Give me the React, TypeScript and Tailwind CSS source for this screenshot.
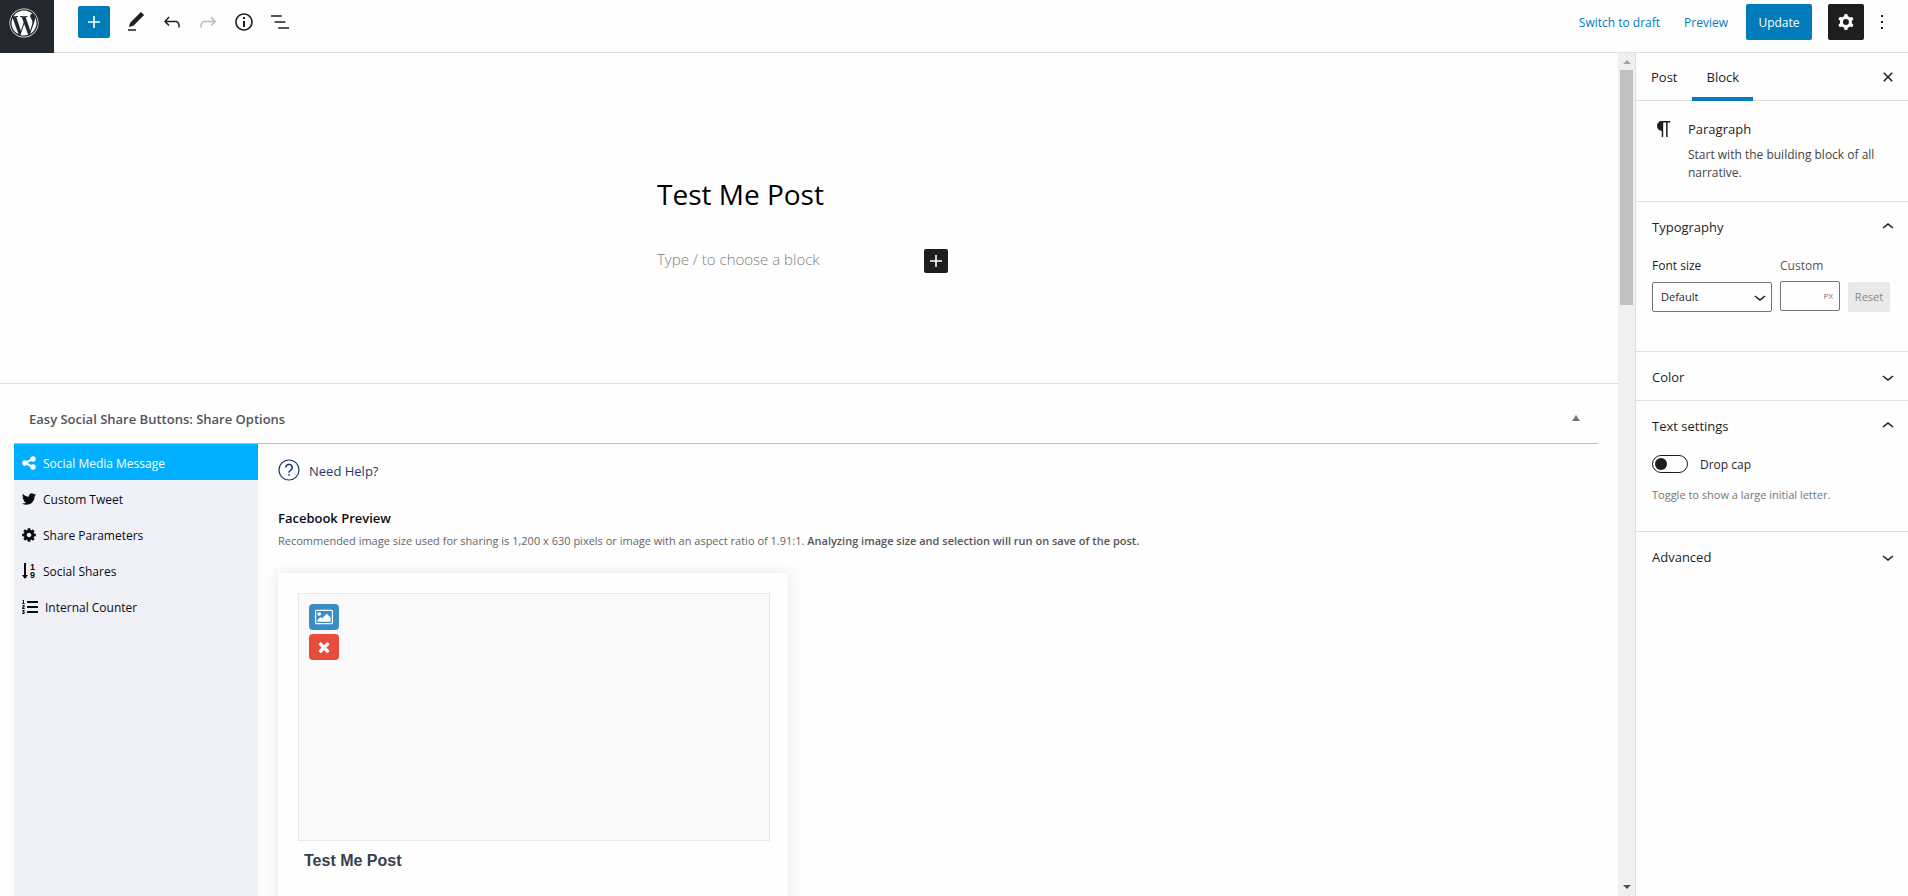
import { useState } from 'react';
import type { ReactNode } from 'react';
import clsx from 'clsx';
import { FaListOl, FaWordpress } from 'react-icons/fa';

const icons = {
    plus: 'M18 11.2h-5.2V6h-1.6v5.2H6v1.6h5.2V18h1.6v-5.2H18z',
    pencil: 'M20.1 5.1L16.9 2 6.2 12.7l-1.3 4.4 4.5-1.3L20.1 5.1zM4 20.8h8v-1.5H4v1.5z',
    undo: 'M18.3 11.7c-.6-.6-1.4-.9-2.3-.9H6.7l2.9-3.3-1.1-1-4.5 5L8.5 16l1-1-2.7-2.7H16c.5 0 .9.2 1.3.5 1 1 1 3.4 1 4.5v.3h1.5v-.2c0-1.5 0-4.3-1.5-5.7z',
    redo: 'M15.6 6.5l-1.1 1 2.9 3.3H8c-.9 0-1.7.3-2.3.9-1.4 1.5-1.4 4.2-1.4 5.6v.2h1.5v-.3c0-1.1 0-3.5 1-4.5.3-.3.7-.5 1.3-.5h9.2L14.5 15l1.1 1.1 4.6-4.6-4.6-5z',
    info: 'M12 3.2c-4.8 0-8.8 3.9-8.8 8.8 0 4.8 3.9 8.8 8.8 8.8 4.8 0 8.8-3.9 8.8-8.8 0-4.8-4-8.8-8.8-8.8zm0 16c-4 0-7.2-3.3-7.2-7.2C4.8 8 8 4.8 12 4.8s7.2 3.3 7.2 7.2c0 4-3.2 7.2-7.2 7.2zM11 17h2v-6h-2v6zm0-8h2V7h-2v2z',
    outline: 'M13.8 5.2H3v1.5h10.8V5.2zm-3.6 12v1.5H21v-1.5H10.2zm7.2-6H6.6v1.5h10.8v-1.5z',
    cog: 'M10.289 4.836A1 1 0 0111.275 4h1.306a1 1 0 01.987.836l.244 1.466c.787.26 1.503.679 2.108 1.218l1.393-.522a1 1 0 011.216.437l.653 1.13a1 1 0 01-.23 1.273l-1.148.944a6.025 6.025 0 010 2.435l1.149.946a1 1 0 01.23 1.272l-.653 1.13a1 1 0 01-1.216.437l-1.394-.522c-.605.54-1.32.958-2.108 1.218l-.244 1.466a1 1 0 01-.987.836h-1.306a1 1 0 01-.986-.836l-.244-1.466a5.995 5.995 0 01-2.108-1.218l-1.394.522a1 1 0 01-1.217-.436l-.653-1.131a1 1 0 01.23-1.272l1.149-.946a6.026 6.026 0 010-2.435l-1.148-.944a1 1 0 01-.23-1.272l.653-1.131a1 1 0 011.217-.437l1.393.522a5.994 5.994 0 012.108-1.218l.244-1.466zM14.929 12a3 3 0 11-6 0 3 3 0 016 0z',
    more: 'M13 19h-2v-2h2v2zm0-6h-2v-2h2v2zm0-6h-2V5h2v2z',
    close: 'M12 13.06l3.712 3.713 1.061-1.06L13.061 12l3.712-3.712-1.06-1.06L12 10.938 8.288 7.227l-1.061 1.06L10.939 12l-3.712 3.712 1.06 1.061L12 13.061z',
    down: 'M17.5 11.6L12 16l-5.5-4.4.9-1.2L12 14l4.5-3.6 1 1.2z',
    up: 'M6.5 12.4L12 8l5.5 4.4-.9 1.2L12 10l-4.5 3.6-1-1.2z',
    paragraph: 'M18.3 4H9.9v-.1l-.9.2c-2.3.4-4 2.4-4 4.8s1.7 4.4 4 4.8l.7.1V20h1.5V5.5h2.9V20h1.5V5.5h2.7V4z',
};

const glyphs = {
    share: 'M1344 1024q133 0 226.5 93.5t93.5 226.5-93.5 226.5-226.5 93.5-226.5-93.5-93.5-226.5q0-12 2-34l-360-180q-92 86-218 86-133 0-226.5-93.5t-93.5-226.5 93.5-226.5 226.5-93.5q126 0 218 86l360-180q-2-22-2-34 0-133 93.5-226.5t226.5-93.5 226.5 93.5 93.5 226.5-93.5 226.5-226.5 93.5q-126 0-218-86l-360 180q2 22 2 34t-2 34l360 180q92-86 218-86z',
    twitter: 'M1684 408q-67 98-162 167 1 14 1 42 0 130-38 259.5t-115.5 248.5-184.5 210.5-258 146-323 54.5q-271 0-496-145 35 4 78 4 225 0 401-138-105-2-188-64.5t-114-159.5q33 5 61 5 43 0 85-11-112-23-185.5-111.5t-73.5-205.5v-4q68 38 146 41-66-44-105-115t-39-154q0-88 44-163 121 149 294.5 238.5t371.5 99.5q-8-38-8-74 0-134 94.5-228.5t228.5-94.5q140 0 236 102 109-21 205-78-37 115-142 178 93-10 186-50z',
    gear: 'M1152 896q0-106-75-181t-181-75-181 75-75 181 75 181 181 75 181-75 75-181zm512-109v222q0 12-8 23t-20 13l-185 28q-19 54-39 91 35 50 107 138 10 12 10 25t-9 23q-27 37-99 108t-94 71q-12 0-26-9l-138-108q-44 23-91 38-16 136-29 186-7 28-36 28h-222q-14 0-24.5-8.5t-11.5-21.5l-28-184q-49-16-90-37l-141 107q-10 9-25 9-14 0-25-11-126-114-165-168-7-10-7-23 0-12 8-23 15-21 51-66.5t54-70.5q-27-50-41-99l-183-27q-13-2-21-12.5t-8-23.5v-222q0-12 8-23t19-13l186-28q14-46 39-92-40-57-107-138-10-12-10-24 0-10 9-23 26-36 98.5-107.5t94.5-71.5q13 0 26 10l138 107q44-23 91-38 16-136 29-186 7-28 36-28h222q14 0 24.5 8.5t11.5 21.5l28 184q49 16 90 37l142-107q9-9 24-9 13 0 25 10 129 119 165 170 7 8 7 22 0 12-8 23-15 21-51 66.5t-54 70.5q26 50 41 98l183 28q13 2 21 12.5t8 23.5z',
    times: 'M1490 1322q0 40-28 68l-136 136q-28 28-68 28t-68-28l-294-294-294 294q-28 28-68 28t-68-28l-136-136q-28-28-28-68t28-68l294-294-294-294q-28-28-28-68t28-68l136-136q28-28 68-28t68 28l294 294 294-294q28-28 68-28t68 28l136 136q28 28 28 68t-28 68l-294 294 294 294q28 28 28 68z',
    picture: 'M576 576q0 80-56 136t-136 56-136-56-56-136 56-136 136-56 136 56 56 136zm1024 384v448h-1408v-192l320-320 160 160 512-512zm96-704h-1600q-13 0-22.5 9.5t-9.5 22.5v1216q0 13 9.5 22.5t22.5 9.5h1600q13 0 22.5-9.5t9.5-22.5v-1216q0-13-9.5-22.5t-22.5-9.5zm160 32v1216q0 66-47 113t-113 47h-1600q-66 0-113-47t-47-113v-1216q0-66 47-113t113-47h1600q66 0 113 47t47 113z',
};

const Icon = ({ name, className = 'size-6' }: { name: keyof typeof icons; className?: string }) => (
    <svg viewBox="0 0 24 24" fill="currentColor" fillRule="evenodd" aria-hidden="true" className={`shrink-0 ${className}`}>
        <path d={icons[name]} />
    </svg>
);

const Glyph = ({ name, className = 'size-4' }: { name: keyof typeof glyphs; className?: string }) => (
    <svg viewBox={name === 'picture' ? '-64 0 1920 1792' : '0 0 1792 1792'} fill="currentColor" aria-hidden="true" className={`shrink-0 ${className}`}>
        <path d={glyphs[name]} />
    </svg>
);

const SortIcon = () => (
    <svg
        viewBox="0 0 16 16"
        fill="currentColor"
        aria-hidden="true"
        className="size-4 shrink-0 overflow-visible font-['Liberation_Sans',Arial,sans-serif] text-[9px] font-bold"
    >
        <path d="M3 0h2v12h2l-3 4-3-4h2z" />
        <text x="9" y="7">1</text>
        <text x="9" y="15">9</text>
    </svg>
);

const tools: Array<{ icon: keyof typeof icons; label: string; disabled?: boolean }> = [
    { icon: 'pencil', label: 'Tools' },
    { icon: 'undo', label: 'Undo' },
    { icon: 'redo', label: 'Redo', disabled: true },
    { icon: 'info', label: 'Details' },
    { icon: 'outline', label: 'Outline' },
];

function Header() {
    return (
        <header className="flex h-[53px] shrink-0 border-b border-[#e0e0e0]">
            <a href="#" aria-label="View Posts" className="-mb-px w-[54px] bg-[#23282e] pl-[9px] pt-2 text-white">
                <FaWordpress className="size-[30px]" />
            </a>
            <div className="flex h-11 flex-1 items-center justify-between pl-6 pr-2">
                <div className="flex items-center">
                    <button aria-label="Add block" className="mr-2 flex size-8 items-center justify-center rounded-xs bg-[#007cba] text-white">
                        <Icon name="plus" />
                    </button>
                    {tools.map(({ icon, label, disabled }) => (
                        <button
                            key={label}
                            aria-label={label}
                            disabled={disabled}
                            className="flex size-9 items-center justify-center disabled:text-[#bbb]"
                        >
                            <Icon name={icon} />
                        </button>
                    ))}
                </div>
                <div className="flex items-center text-xs">
                    <button className="mr-6 pt-0.5 text-[#007cba]">Switch to draft</button>
                    <button className="mr-[18px] pt-0.5 text-[#007cba]">Preview</button>
                    <button className="mr-4 h-9 w-[66px] rounded-xs bg-[#007cba] pt-0.5 font-medium text-white">Update</button>
                    <button aria-label="Settings" className="flex size-9 items-center justify-center rounded-xs bg-[#1e1e1e] text-white">
                        <Icon name="cog" />
                    </button>
                    <button aria-label="Options" className="flex size-9 items-center justify-center">
                        <Icon name="more" />
                    </button>
                </div>
            </div>
        </header>
    );
}

const boxTabs: Array<{ label: string; icon: ReactNode }> = [
    { label: 'Social Media Message', icon: <Glyph name="share" /> },
    { label: 'Custom Tweet', icon: <Glyph name="twitter" /> },
    { label: 'Share Parameters', icon: <Glyph name="gear" /> },
    { label: 'Social Shares', icon: <SortIcon /> },
    { label: 'Internal Counter', icon: <FaListOl className="mx-px size-4" /> },
];

function ShareOptions() {
    const [tabIndex, setTabIndex] = useState(0);
    return (
        <section className="flex min-h-0 flex-1 flex-col border-t border-[#dcdcdc] pl-[14px] pr-5">
            <div className="flex h-[60px] shrink-0 items-center justify-between border-b border-[#bfbfbf] pl-[15px] pr-[18px] pt-3">
                <h2 className="text-[13px] font-semibold text-[#50555b]">Easy Social Share Buttons: Share Options</h2>
                <button aria-label="Toggle panel">
                    <svg viewBox="0 0 8 6" fill="#72777c" className="mb-1 h-[6px] w-2">
                        <path d="M4 0l4 6H0z" />
                    </svg>
                </button>
            </div>
            <div className="flex min-h-0 flex-1">
                <nav className="w-[244px] shrink-0 bg-[#eff1f6]">
                    {boxTabs.map(({ label, icon }, index) => (
                        <button
                            key={label}
                            onClick={() => setTabIndex(index)}
                            className={clsx(
                                'flex h-9 w-full items-center gap-1.5 pl-[7px] pt-px text-xs',
                                tabIndex === index ? 'bg-[#00b0ff] font-medium text-white' : 'text-[#0b0b18]',
                            )}
                        >
                            {icon}
                            <span className="pt-0.5">{label}</span>
                        </button>
                    ))}
                </nav>
                <div className="min-w-0 flex-1 pl-5 pt-[15px]">
                    <a href="#" className="flex h-[22px] items-center gap-[9px] text-[13px] text-[#1e3a6e]">
                        <svg viewBox="0 0 22 22" fill="none" stroke="currentColor" strokeWidth="1.2" className="size-[22px]">
                            <circle cx="11" cy="11" r="10" />
                            <path d="M7.8 8.6a3.2 3.2 0 1 1 4.7 2.8c-1 .6-1.5 1-1.5 2.3" strokeWidth="1.5" />
                            <path d="M11 15.2v1.6" strokeWidth="1.6" />
                        </svg>
                        <span className="pt-1">Need Help?</span>
                    </a>
                    <h3 className="mt-[27px] text-[13px] font-semibold leading-5 text-[#0b0b18]">Facebook Preview</h3>
                    <p className="mt-[5px] text-[11px] leading-4 text-[#666]">
                        Recommended image size used for sharing is 1,200 x 630 pixels or image with an aspect ratio of 1.91:1.{' '}
                        <strong className="font-semibold text-[#555]">Analyzing image size and selection will run on save of the post.</strong>
                    </p>
                    <div className="mt-6 h-[480px] w-[510px] max-w-full bg-[#fefefe] pl-5 pr-[18px] pt-5 shadow-[0_0_14px_rgba(0,0,0,0.1)]">
                        <div className="flex h-[248px] flex-col gap-1 border border-[#e9e9e9] bg-[#fafafa] p-2.5">
                            <button aria-label="Select image" className="flex h-[26px] w-[30px] items-center justify-center rounded bg-[#3b8dc8] text-white">
                                <Glyph name="picture" className="size-[18px]" />
                            </button>
                            <button aria-label="Remove image" className="flex h-[26px] w-[30px] items-center justify-center rounded bg-[#e74c3c] text-white">
                                <Glyph name="times" />
                            </button>
                        </div>
                        <div className="px-1.5 pt-2 font-['Liberation_Sans',Arial,sans-serif] text-base font-bold text-[#373e4d]">Test Me Post</div>
                    </div>
                </div>
            </div>
        </section>
    );
}

function Panel({ title, children }: { title: string; children?: ReactNode }) {
    const [open, setOpen] = useState(!!children);
    return (
        <section className="border-b border-[#e0e0e0] last:border-none">
            <button onClick={() => setOpen(!open)} className="flex h-12 w-full items-center justify-between pl-4 pr-2 pt-0.5 text-[13px] font-medium">
                <span className="pt-0.5">{title}</span>
                <Icon name={open ? 'up' : 'down'} />
            </button>
            {open && children}
        </section>
    );
}

function Sidebar() {
    return (
        <aside className="w-[273px] shrink-0 border-l border-[#e0e0e0] text-xs">
            <div className="flex h-12 items-stretch border-b border-[#e0e0e0] text-[13px]">
                <button className="px-[15px] pt-0.5 font-medium">Post</button>
                <button className="-mb-px border-b-4 border-[#007cba] px-[14px] pt-1.5 font-medium">Block</button>
                <button aria-label="Close settings" className="ml-auto mr-2">
                    <Icon name="close" />
                </button>
            </div>
            <div className="flex h-[101px] gap-3 border-b border-[#e0e0e0] pl-4 pr-4 pt-4">
                <Icon name="paragraph" />
                <div>
                    <h2 className="text-[13px] font-medium leading-6">Paragraph</h2>
                    <p className="mt-[5px] leading-[18px] text-[#444]">Start with the building block of all narrative.</p>
                </div>
            </div>
            <Panel title="Typography">
                <div className="flex h-[101px] items-start gap-2 pl-4 pt-2">
                    <div className="flex w-[120px] flex-col gap-2">
                        <label htmlFor="font-size" className="leading-4">
                            Font size
                        </label>
                        <div className="relative">
                            <select id="font-size" className="h-[30px] w-full appearance-none rounded-xs border border-[#757575] pl-2 text-[11px]">
                                <option>Default</option>
                            </select>
                            <Icon name="down" className="pointer-events-none absolute right-0 top-[3px] size-6" />
                        </div>
                    </div>
                    <div className="flex w-[60px] flex-col gap-[7px]">
                        <label htmlFor="custom-size" className="leading-4 text-[#555]">
                            Custom
                        </label>
                        <div className="flex h-[30px] items-center rounded-xs border border-[#757575] pr-1.5">
                            <input id="custom-size" className="w-full min-w-0 pl-2 text-[11px] outline-none" />
                            <span className="text-[8px] text-[#757575]">PX</span>
                        </div>
                    </div>
                    <button disabled className="mt-6 h-[30px] w-[42px] rounded-xs bg-[#e9e9e9] text-[11px] text-[#8a8a8a]">
                        Reset
                    </button>
                </div>
            </Panel>
            <Panel title="Color" />
            <Panel title="Text settings">
                <div className="h-[82px] px-4 pt-1.5">
                    <label className="flex items-center gap-3">
                        <input
                            type="checkbox"
                            className="h-[18px] w-9 appearance-none rounded-full border border-[#1e1e1e] p-0.5 before:block before:size-3 before:rounded-full before:bg-[#1e1e1e] checked:before:ml-[18px]"
                        />
                        <span className="pt-0.5">Drop cap</span>
                    </label>
                    <p className="mt-[14px] text-[11px] leading-4 text-[#757575]">Toggle to show a large initial letter.</p>
                </div>
            </Panel>
            <Panel title="Advanced" />
        </aside>
    );
}

export default function App() {
    return (
        <div className="flex h-screen flex-col overflow-hidden bg-[#fefefe] font-['Open_Sans','Noto_Sans',sans-serif] text-[13px] text-[#1e1e1e]">
            <Header />
            <div className="flex min-h-0 flex-1">
                <main className="flex min-w-0 flex-1 flex-col">
                    <div className="h-[330px] shrink-0 pt-[121px]">
                        <div className="mx-auto w-[304px]">
                            <h1 className="text-[28px] leading-10 text-black">Test Me Post</h1>
                            <div className="mt-[35px] flex items-center justify-between pr-[13px]">
                                <p className="pb-1 text-[15px] leading-5 font-light text-[#808080]">Type / to choose a block</p>
                                <button aria-label="Add block" className="rounded-xs bg-[#1e1e1e] text-white">
                                    <Icon name="plus" />
                                </button>
                            </div>
                        </div>
                    </div>
                    <ShareOptions />
                </main>
                {/* scrollbar */}
                <div className="flex w-[17px] shrink-0 flex-col items-center bg-[#f0f0f0]">
                    <svg viewBox="0 0 8 4" fill="#a3a3a3" className="mb-1.5 mt-[7px] h-1 w-2">
                        <path d="M4 0l4 4H0z" />
                    </svg>
                    <div className="h-[235px] w-[13px] bg-[#c1c1c1]" />
                    <svg viewBox="0 0 8 4" fill="#505050" className="mb-[7px] mt-auto h-1 w-2">
                        <path d="M0 0h8L4 4z" />
                    </svg>
                </div>
                <Sidebar />
            </div>
        </div>
    );
}
